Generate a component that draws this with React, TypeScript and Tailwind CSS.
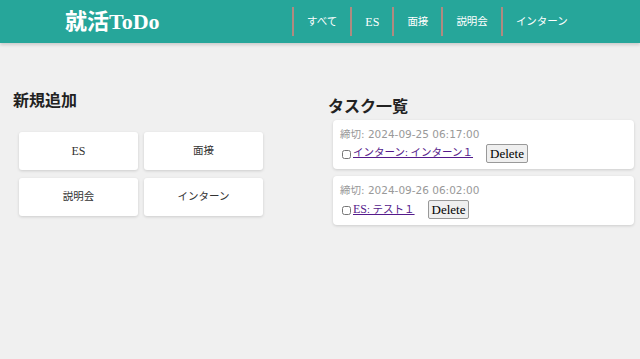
import React from "react";

const serif = { fontFamily: '"Liberation Serif", "Noto Sans CJK JP", serif' };

const isLatin = (s: string) => /^[A-Za-z]+$/.test(s);

export default function App() {
  const navs = ["すべて", "ES", "面接", "説明会", "インターン"];
  const tasks = [
    { date: "2024-09-25 06:17:00", pre: "インターン", title: ": インターン１" },
    { date: "2024-09-26 06:02:00", pre: "ES", title: ": テスト１" },
  ];
  return (
    <div className="w-[640px] h-[359px] bg-[#f0f0f0] overflow-hidden" style={serif}>
      <header className="h-[43px] bg-[#26a69a] flex items-center shadow-[0_2px_3px_rgba(0,0,0,0.15)]">
        <div className="pl-[65px] w-[292px] text-white text-[22px] font-bold leading-none">就活ToDo</div>
        <nav className="flex h-[29px]">
          {navs.map((n) => (
            <div
              key={n}
              className={
                "border-l-2 border-[#b08a80] px-[13px] flex items-center text-white " +
                (isLatin(n) ? "text-[12px]" : "text-[10.5px]")
              }
            >
              {n}
            </div>
          ))}
        </nav>
      </header>
      <div className="flex">
        <div className="w-[320px] pl-[13px]">
          <h2 className="mt-[50px] text-[16px] font-bold text-[#222] leading-none">新規追加</h2>
          <div className="mt-[23px] ml-[6px] grid grid-cols-[119px_119px] gap-x-[6px] gap-y-[8px]">
            {["ES", "面接", "説明会", "インターン"].map((b) => (
              <div
                key={b}
                className={
                  "h-[38px] bg-white rounded-[3px] shadow-[0_1px_3px_rgba(0,0,0,0.15)] flex items-center justify-center text-[#333] " +
                  (isLatin(b) ? "text-[12px]" : "text-[10.5px]")
                }
              >
                {b}
              </div>
            ))}
          </div>
        </div>
        <div className="w-[320px] pl-[8px]">
          <h2 className="mt-[56px] text-[16px] font-bold text-[#222] leading-none">タスク一覧</h2>
          <div className="mt-[5px] ml-[5px] flex flex-col gap-[7px]">
            {tasks.map((t) => (
              <div key={t.date} className="w-[301px] h-[49px] bg-white rounded-[4px] shadow-[0_1px_3px_rgba(0,0,0,0.15)] pl-[7px] pt-[9px]">
                <div className="text-[10.5px] text-[#999] leading-none" style={{ fontFamily: '"DejaVu Sans", "Noto Sans CJK JP", sans-serif' }}>
                  締切: {t.date}
                </div>
                <div className="flex items-center mt-[4px]">
                  <input type="checkbox" className="w-[9px] h-[9px] ml-[2px] mr-[2px] mt-[2px]" />
                  <a href="#" className="text-[10.5px] text-[#551a8b] underline leading-none">
                    <span className={isLatin(t.pre) ? "text-[12px]" : ""}>{t.pre}</span>
                    {t.title}
                  </a>
                  <button className="ml-[13px] h-[19px] px-[3px] bg-[#efefef] border border-[#999] rounded-[2px] text-[13px] text-black leading-none">
                    Delete
                  </button>
                </div>
              </div>
            ))}
          </div>
        </div>
      </div>
    </div>
  );
}
